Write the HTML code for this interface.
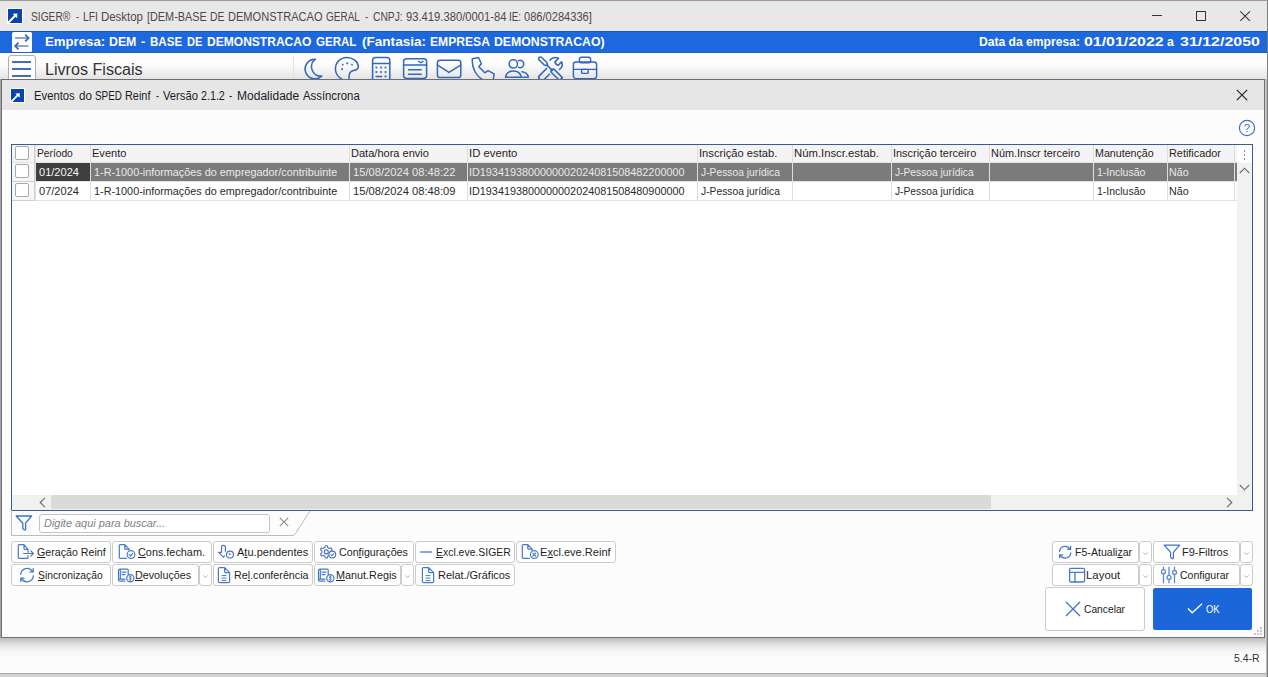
<!DOCTYPE html>
<html><head><meta charset="utf-8">
<style>
*{box-sizing:border-box;margin:0;padding:0}
html,body{width:1268px;height:677px;overflow:hidden;background:#fcfcfc;font-family:"Liberation Sans",sans-serif;position:relative}
.a{position:absolute}
.t{white-space:nowrap;line-height:1;transform-origin:0 0}
u{text-decoration:underline;text-underline-offset:1.2px;text-decoration-thickness:1px}
svg{overflow:visible}
</style></head><body>
<div class="a" style="left:0px;top:0px;width:1268px;height:31px;background:#e8e8e8"></div>
<div class="a" style="left:0px;top:0px;width:1268px;height:1px;background:#9c9c9c"></div>
<svg class="a" style="left:7px;top:8px;" width="16" height="16" viewBox="0 0 16 16"><rect x="0" y="0" width="16" height="16" fill="#fff"/><rect x="1" y="1" width="14" height="14" fill="#0a42b0"/><path d="M1.2 14.8 L8.6 7.2" stroke="#fff" stroke-width="2"/><path d="M5.6 5.8 L10.4 5.6 L10.2 10.4 Z" fill="#fff"/></svg>
<div class="a" style="left:1152px;top:15px;width:10px;height:1px;background:#333"></div>
<div class="a" style="left:1196px;top:11px;width:10px;height:10px;border:1px solid #333"></div>
<svg class="a" style="left:1240px;top:11px;" width="10" height="10" viewBox="0 0 10 10"><path d="M0.3 0.3 L9.9 9.9 M9.9 0.3 L0.3 9.9" stroke="#333" stroke-width="1.05"/></svg>
<div class="a" style="left:0px;top:31px;width:1268px;height:22px;background:#1d68dc"></div>
<div class="a" style="left:0px;top:31px;width:1268px;height:1px;background:#1a57b8"></div>
<div class="a" style="left:0px;top:52px;width:1268px;height:1px;background:#1a5ec8"></div>
<svg class="a" style="left:12px;top:32px;" width="20" height="20" viewBox="0 0 20 20"><rect x="0" y="0" width="20" height="20" rx="1.5" fill="#fff"/><path d="M3.1 6 H16" stroke="#8ea3c6" stroke-width="1.9"/><path d="M13.2 2.6 L16.6 6 L13.2 9.3" stroke="#3a6cc4" stroke-width="1.8" fill="none"/><path d="M4 14 H16.6" stroke="#8ea3c6" stroke-width="1.9"/><path d="M6.5 10.7 L3.2 14 L6.5 17.3" stroke="#3a6cc4" stroke-width="1.8" fill="none"/></svg>
<div class="a" style="left:0px;top:53px;width:1268px;height:26px;background:linear-gradient(#fdfffe 0%,#fdfdfd 40%,#f1f1f1 72%,#e3e3e3 100%)"></div>
<div class="a" style="left:8px;top:55px;width:28px;height:30px;border:1px solid #aeaeae;border-radius:3px;background:#fff"></div>
<div class="a" style="left:12px;top:61px;width:19px;height:2px;background:#4270b8"></div>
<div class="a" style="left:12px;top:68px;width:19px;height:2px;background:#4270b8"></div>
<div class="a" style="left:12px;top:75px;width:19px;height:2px;background:#4270b8"></div>
<div class="a" style="left:293px;top:55px;width:1px;height:24px;background:#e2e2e2"></div>
<svg class="a" style="left:300px;top:53px;" width="26" height="26" viewBox="0 0 26 26"><g fill="none" stroke="#3166c2" stroke-width="1.6" stroke-linecap="round" stroke-linejoin="round"><path d="M15.4 6.2 A9.8 9.8 0 1 0 21.7 23.1 A9.35 9.35 0 0 1 15.4 6.2 Z"/></g></svg>
<svg class="a" style="left:334px;top:56px;" width="26" height="24" viewBox="0 0 26 24"><g fill="none" stroke="#3166c2" stroke-width="1.5" stroke-linecap="round" stroke-linejoin="round"><path d="M15.2 23.5 C14.6 20.5 14.8 15.5 19.5 14.6 C23 14 24.6 12.7 24.4 10.3 C23.8 5.2 18.5 1.4 12.8 1.4 C6.3 1.4 1.4 6.6 1.4 12.8 C1.4 17.6 4.6 21.6 8.6 23.6"/><g fill="#3166c2" stroke="none"><rect x="7.2" y="12.3" width="1.8" height="1.8"/><rect x="12.3" y="6.4" width="1.8" height="1.8"/><rect x="7.9" y="7.8" width="1.6" height="1.6"/><rect x="17.2" y="7.8" width="1.6" height="1.6"/></g></g></svg>
<svg class="a" style="left:370px;top:56px;" width="22" height="26" viewBox="0 0 22 26"><g fill="none" stroke="#3166c2" stroke-width="1.5" stroke-linecap="round" stroke-linejoin="round"><rect x="2.6" y="1.6" width="17.2" height="25" rx="3"/><path d="M2.6 7.6 H19.8"/><path d="M6.2 20.4 H11.6"/><g fill="#3166c2" stroke="none"><rect x="5.5" y="10.6" width="1.8" height="1.8"/><rect x="10.1" y="10.6" width="1.8" height="1.8"/><rect x="14.6" y="10.6" width="1.8" height="1.8"/><rect x="5.5" y="15.1" width="1.8" height="1.8"/><rect x="10.1" y="15.1" width="1.8" height="1.8"/><rect x="14.6" y="15.1" width="1.8" height="1.8"/><rect x="14.6" y="19.5" width="1.8" height="1.8"/></g></g></svg>
<svg class="a" style="left:402px;top:57px;" width="26" height="23" viewBox="0 0 26 23"><g fill="none" stroke="#3166c2" stroke-width="1.5" stroke-linecap="round" stroke-linejoin="round"><rect x="1.6" y="1.8" width="23" height="19.6" rx="2.8"/><path d="M1.6 8 H24.6 M6.6 12.7 H19.2 M6.6 17.2 H19.2"/><path d="M16.6 4.4 L18.8 5.8 L21 4.4" stroke-width="1.3"/></g></svg>
<svg class="a" style="left:436px;top:59px;" width="26" height="20" viewBox="0 0 26 20"><g fill="none" stroke="#3166c2" stroke-width="1.5" stroke-linecap="round" stroke-linejoin="round"><rect x="1.4" y="1.3" width="23.4" height="17.2" rx="2.6"/><path d="M1.6 6.2 L13 13.4 L24.6 6.2"/></g></svg>
<svg class="a" style="left:470px;top:56px;" width="26" height="25" viewBox="0 0 26 25"><g fill="none" stroke="#3166c2" stroke-width="1.5" stroke-linecap="round" stroke-linejoin="round"><path d="M2.3 2.8 L8.5 1.5 L11.4 7.7 L8.8 10.8 L14.8 16.8 L18.1 14.7 L24.1 17.8 L23.2 24 M2.3 2.8 C1.8 12.5 6.5 20.5 13.5 24.2"/></g></svg>
<svg class="a" style="left:504px;top:58px;" width="26" height="21" viewBox="0 0 26 21"><g fill="none" stroke="#3166c2" stroke-width="1.5" stroke-linecap="round" stroke-linejoin="round"><circle cx="9.3" cy="5.9" r="4.2"/><path d="M14.4 2.7 A3.7 3.7 0 1 1 14.6 9.4"/><path d="M1.5 19.2 C2.2 15.5 5.2 13 9.4 13 C13.6 13 16.7 15.5 17.3 19.2 Z"/><path d="M18 13.8 C21.6 14.4 23.9 16.2 24.4 19.2 H18.8"/></g></svg>
<svg class="a" style="left:536px;top:54px;" width="30" height="27" viewBox="0 0 30 27"><g fill="none" stroke="#3166c2" stroke-width="1.6" stroke-linecap="round" stroke-linejoin="round"><path d="M5.6 3.5 C4.9 2.8 3.8 2.8 3.1 3.5 C2.4 4.2 2.4 5.3 3.1 6 L8.3 11 L11.6 11.7 L10.9 8.5 Z"/><path d="M11.6 11.7 L16.4 16.4"/><path d="M15.7 18.7 C14.9 17.9 14.9 16.6 15.7 15.8 C16.5 15 17.8 15 18.6 15.8 L26.4 23.6 L23.5 26.5 Z"/><path d="M13.9 6.4 C15.6 3.6 19.6 2.7 22.6 4.3 L19 7.9 C19.3 9.9 20.3 10.9 22.3 11.2 L25.6 7.8 C26.9 10.6 26 13.6 23.5 15.3"/><path d="M10.6 14.5 L3.5 21.6 C2.6 22.6 2.6 24.1 3.5 25 M13.4 20.2 L8.4 25.2"/></g></svg>
<svg class="a" style="left:572px;top:56px;" width="26" height="24" viewBox="0 0 26 24"><g fill="none" stroke="#3166c2" stroke-width="1.4" stroke-linecap="round" stroke-linejoin="round"><rect x="7.4" y="1.3" width="11.2" height="5.4" rx="1.8"/><rect x="1.4" y="6" width="23.2" height="16.6" rx="2.6"/><path d="M1.4 13.4 H24.6"/><rect x="9.6" y="13.4" width="6.6" height="4" rx="0.8"/></g></svg>
<div class="a" style="left:0px;top:79px;width:1268px;height:598px;background:#fcfcfc"></div>
<div class="a" style="left:0px;top:638px;width:1268px;height:20px;background:linear-gradient(#bdbdbd 0px,#c8c8c8 2px,#dadada 5px,#ebebeb 9px,#f7f7f7 14px,#fcfcfc 19px)"></div>
<div class="a" style="left:0px;top:673px;width:1268px;height:1px;background:#a9a9a9"></div>
<div class="a" style="left:0px;top:674px;width:1268px;height:3px;background:#d2d2d2"></div>
<div class="a" style="left:0px;top:79px;width:1px;height:559px;background:#a4a4a4"></div>
<div class="a" style="left:1265px;top:79px;width:1px;height:560px;background:#cdcdcd"></div>
<div class="a" style="left:1266px;top:79px;width:1px;height:598px;background:#b9b9b9"></div>
<div class="a" style="left:1267px;top:0px;width:1px;height:677px;background:#7c7c7c"></div>
<div class="a" style="left:1px;top:79px;width:1264px;height:559px;border:1px solid #6f6f6f;background:#fcfcfc"></div>
<div class="a" style="left:2px;top:80px;width:1262px;height:30px;background:#e6e6e6"></div>
<svg class="a" style="left:10px;top:88px;" width="15" height="15" viewBox="0 0 15 15"><rect x="0" y="0" width="15" height="15" fill="#fff"/><rect x="1" y="1" width="13" height="13" fill="#0a42b0"/><path d="M1.1 13.9 L8.1 6.8" stroke="#fff" stroke-width="1.9"/><path d="M5.3 5.4 L9.8 5.2 L9.6 9.7 Z" fill="#fff"/></svg>
<svg class="a" style="left:1236px;top:89px;" width="12" height="12" viewBox="0 0 12 12"><path d="M0.8 0.8 L11.2 11.2 M11.2 0.8 L0.8 11.2" stroke="#222" stroke-width="1.2"/></svg>
<svg class="a" style="left:1238px;top:119px;" width="18" height="18" viewBox="0 0 18 18"><circle cx="9" cy="9" r="7.6" fill="none" stroke="#3e74c8" stroke-width="1.2"/><text x="9" y="13.2" text-anchor="middle" font-family="Liberation Sans" font-size="11.5" fill="#3e74c8">?</text></svg>
<div class="a" style="left:11px;top:144px;width:1242px;height:367px;border:1px solid #3d5a94;background:#fff"></div>
<div class="a" style="left:12px;top:145px;width:1225px;height:17px;background:#f4f4f4"></div>
<div class="a" style="left:12px;top:162px;width:1225px;height:1px;background:#e3e3e3"></div>
<div class="a" style="left:1237px;top:145px;width:15px;height:18px;background:#fff"></div>
<div class="a" style="left:35px;top:145px;width:1px;height:56px;background:#dedede"></div>
<div class="a" style="left:90px;top:145px;width:1px;height:56px;background:#dedede"></div>
<div class="a" style="left:349px;top:145px;width:1px;height:56px;background:#dedede"></div>
<div class="a" style="left:467px;top:145px;width:1px;height:56px;background:#dedede"></div>
<div class="a" style="left:697px;top:145px;width:1px;height:56px;background:#dedede"></div>
<div class="a" style="left:792px;top:145px;width:1px;height:56px;background:#dedede"></div>
<div class="a" style="left:891px;top:145px;width:1px;height:56px;background:#dedede"></div>
<div class="a" style="left:989px;top:145px;width:1px;height:56px;background:#dedede"></div>
<div class="a" style="left:1093px;top:145px;width:1px;height:56px;background:#dedede"></div>
<div class="a" style="left:1167px;top:145px;width:1px;height:56px;background:#dedede"></div>
<div class="a" style="left:1234px;top:145px;width:1px;height:56px;background:#dedede"></div>
<div class="a" style="left:12px;top:163px;width:23px;height:38px;background:#f7f7f7"></div>
<div class="a" style="left:12px;top:181px;width:1225px;height:1px;background:#e2e2e2"></div>
<div class="a" style="left:12px;top:200px;width:1225px;height:1px;background:#e2e2e2"></div>
<div class="a" style="left:12px;top:181px;width:23px;height:1px;background:#cfcfcf"></div>
<div class="a" style="left:12px;top:200px;width:23px;height:1px;background:#cfcfcf"></div>
<div class="a" style="left:34px;top:145px;width:1px;height:56px;background:#d0d0d0"></div>
<div class="a" style="left:36px;top:163px;width:54px;height:18px;background:#3f3f3f"></div>
<div class="a" style="left:91px;top:163px;width:258px;height:18px;background:#7b7b7b"></div>
<div class="a" style="left:350px;top:163px;width:117px;height:18px;background:#7b7b7b"></div>
<div class="a" style="left:468px;top:163px;width:229px;height:18px;background:#7b7b7b"></div>
<div class="a" style="left:698px;top:163px;width:94px;height:18px;background:#7b7b7b"></div>
<div class="a" style="left:793px;top:163px;width:98px;height:18px;background:#7b7b7b"></div>
<div class="a" style="left:892px;top:163px;width:97px;height:18px;background:#7b7b7b"></div>
<div class="a" style="left:990px;top:163px;width:103px;height:18px;background:#7b7b7b"></div>
<div class="a" style="left:1094px;top:163px;width:73px;height:18px;background:#7b7b7b"></div>
<div class="a" style="left:1168px;top:163px;width:66px;height:18px;background:#7b7b7b"></div>
<div class="a" style="left:1235px;top:163px;width:2px;height:18px;background:#7b7b7b"></div>
<div class="a" style="left:15px;top:146px;width:14px;height:14px;border:1px solid #a9a9a9;border-radius:2px;background:#fff"></div>
<div class="a" style="left:15px;top:164px;width:14px;height:14px;border:1px solid #a9a9a9;border-radius:2px;background:#fff"></div>
<div class="a" style="left:15px;top:183px;width:14px;height:14px;border:1px solid #a9a9a9;border-radius:2px;background:#fff"></div>
<div class="a" style="left:1243.7px;top:150.2px;width:1.7px;height:1.7px;background:#6078c8;border-radius:0.5px"></div>
<div class="a" style="left:1243.7px;top:154.39999999999998px;width:1.7px;height:1.7px;background:#6078c8;border-radius:0.5px"></div>
<div class="a" style="left:1243.7px;top:158.29999999999998px;width:1.7px;height:1.7px;background:#6078c8;border-radius:0.5px"></div>
<div class="a" style="left:1237px;top:163px;width:15px;height:347px;background:#f1f1f1"></div>
<svg class="a" style="left:1239px;top:166px;" width="11" height="9" viewBox="0 0 11 9"><path d="M0.8 7 L5.5 2.2 L10.2 7" fill="none" stroke="#6b6b6b" stroke-width="1.1"/></svg>
<svg class="a" style="left:1239px;top:483px;" width="11" height="9" viewBox="0 0 11 9"><path d="M0.8 2 L5.5 6.8 L10.2 2" fill="none" stroke="#6b6b6b" stroke-width="1.1"/></svg>
<div class="a" style="left:12px;top:495px;width:1225px;height:15px;background:#f1f1f1"></div>
<div class="a" style="left:51px;top:495px;width:940px;height:14px;background:#dadada"></div>
<svg class="a" style="left:38px;top:497px;" width="9" height="11" viewBox="0 0 9 11"><path d="M7 0.8 L2.2 5.5 L7 10.2" fill="none" stroke="#6b6b6b" stroke-width="1.1"/></svg>
<svg class="a" style="left:1225px;top:497px;" width="9" height="11" viewBox="0 0 9 11"><path d="M2 0.8 L6.8 5.5 L2 10.2" fill="none" stroke="#6b6b6b" stroke-width="1.1"/></svg>
<svg class="a" style="left:10px;top:510px;" width="305" height="27" viewBox="0 0 305 27"><path d="M1.5 0 V25.5 H282 C283.5 25.5 284.5 25 285.3 23.8 L300 1" fill="none" stroke="#bcbcbc" stroke-width="1"/></svg>
<svg class="a" style="left:15px;top:515px;" width="18" height="16" viewBox="0 0 18 16"><path d="M1.2 1 H16.6 L10.6 8.2 V14.2 C10.6 15 9.6 15 9 14.5 L7.8 13.4 V8.2 Z" fill="none" stroke="#3c73c8" stroke-width="1.3" stroke-linejoin="round"/></svg>
<div class="a" style="left:39px;top:514px;width:231px;height:19px;border:1px solid #c4c4c4;border-radius:3px;background:#fff"></div>
<svg class="a" style="left:279px;top:517px;" width="10" height="10" viewBox="0 0 10 10"><path d="M0.8 0.8 L9.2 9.2 M9.2 0.8 L0.8 9.2" stroke="#8c8c8c" stroke-width="1.1"/></svg>
<div class="a" style="left:11px;top:541px;width:100px;height:22px;border:1px solid #cbcbcb;border-radius:3px;background:#fff;"></div>
<div class="a" style="left:112px;top:541px;width:100px;height:22px;border:1px solid #cbcbcb;border-radius:3px;background:#fff;"></div>
<div class="a" style="left:213px;top:541px;width:100px;height:22px;border:1px solid #cbcbcb;border-radius:3px;background:#fff;"></div>
<div class="a" style="left:314px;top:541px;width:100px;height:22px;border:1px solid #cbcbcb;border-radius:3px;background:#fff;"></div>
<div class="a" style="left:415px;top:541px;width:100px;height:22px;border:1px solid #cbcbcb;border-radius:3px;background:#fff;"></div>
<div class="a" style="left:516px;top:541px;width:100px;height:22px;border:1px solid #cbcbcb;border-radius:3px;background:#fff;"></div>
<div class="a" style="left:11px;top:564px;width:100px;height:22px;border:1px solid #cbcbcb;border-radius:3px;background:#fff;"></div>
<div class="a" style="left:112px;top:564px;width:87px;height:22px;border:1px solid #cbcbcb;border-radius:3px;background:#fff;"></div>
<div class="a" style="left:199px;top:564px;width:13px;height:22px;border:1px solid #cbcbcb;border-radius:3px;background:#fff;"></div>
<svg class="a" style="left:203px;top:575px;" width="5" height="3" viewBox="0 0 5 3"><path d="M0.4 0.5 L2.5 2.4 L4.6 0.5" fill="none" stroke="#a6b6d4" stroke-width="1"/></svg>
<div class="a" style="left:213px;top:564px;width:100px;height:22px;border:1px solid #cbcbcb;border-radius:3px;background:#fff;"></div>
<div class="a" style="left:314px;top:564px;width:87px;height:22px;border:1px solid #cbcbcb;border-radius:3px;background:#fff;"></div>
<div class="a" style="left:401px;top:564px;width:13px;height:22px;border:1px solid #cbcbcb;border-radius:3px;background:#fff;"></div>
<svg class="a" style="left:405px;top:575px;" width="5" height="3" viewBox="0 0 5 3"><path d="M0.4 0.5 L2.5 2.4 L4.6 0.5" fill="none" stroke="#a6b6d4" stroke-width="1"/></svg>
<div class="a" style="left:415px;top:564px;width:100px;height:22px;border:1px solid #cbcbcb;border-radius:3px;background:#fff;"></div>
<div class="a" style="left:1052px;top:541px;width:87px;height:22px;border:1px solid #cbcbcb;border-radius:3px;background:#fff;"></div>
<div class="a" style="left:1139px;top:541px;width:13px;height:22px;border:1px solid #cbcbcb;border-radius:3px;background:#fff;"></div>
<svg class="a" style="left:1143px;top:552px;" width="5" height="3" viewBox="0 0 5 3"><path d="M0.4 0.5 L2.5 2.4 L4.6 0.5" fill="none" stroke="#a6b6d4" stroke-width="1"/></svg>
<div class="a" style="left:1153px;top:541px;width:87px;height:22px;border:1px solid #cbcbcb;border-radius:3px;background:#fff;"></div>
<div class="a" style="left:1240px;top:541px;width:13px;height:22px;border:1px solid #cbcbcb;border-radius:3px;background:#fff;"></div>
<svg class="a" style="left:1244px;top:552px;" width="5" height="3" viewBox="0 0 5 3"><path d="M0.4 0.5 L2.5 2.4 L4.6 0.5" fill="none" stroke="#a6b6d4" stroke-width="1"/></svg>
<div class="a" style="left:1052px;top:564px;width:87px;height:22px;border:1px solid #cbcbcb;border-radius:3px;background:#fff;"></div>
<div class="a" style="left:1139px;top:564px;width:13px;height:22px;border:1px solid #cbcbcb;border-radius:3px;background:#fff;"></div>
<svg class="a" style="left:1143px;top:575px;" width="5" height="3" viewBox="0 0 5 3"><path d="M0.4 0.5 L2.5 2.4 L4.6 0.5" fill="none" stroke="#a6b6d4" stroke-width="1"/></svg>
<div class="a" style="left:1153px;top:564px;width:87px;height:22px;border:1px solid #cbcbcb;border-radius:3px;background:#fff;"></div>
<div class="a" style="left:1240px;top:564px;width:13px;height:22px;border:1px solid #cbcbcb;border-radius:3px;background:#fff;"></div>
<svg class="a" style="left:1244px;top:575px;" width="5" height="3" viewBox="0 0 5 3"><path d="M0.4 0.5 L2.5 2.4 L4.6 0.5" fill="none" stroke="#a6b6d4" stroke-width="1"/></svg>
<div class="a" style="left:1045px;top:587px;width:100px;height:44px;border:1px solid #cbcbcb;border-radius:3px;background:#fff;"></div>
<div class="a" style="left:1153px;top:588px;width:99px;height:42px;background:#1b66d9;border-radius:2px"></div>
<svg class="a" style="left:1065px;top:601px;" width="16" height="16" viewBox="0 0 16 16"><path d="M1 1 L15 15 M15 1 L1 15" stroke="#3f74c9" stroke-width="1.3"/></svg>
<svg class="a" style="left:1187px;top:603px;" width="16" height="11" viewBox="0 0 16 11"><path d="M1 5.5 L5.2 9.8 L15 0.8" fill="none" stroke="#fff" stroke-width="1.3"/></svg>
<div class="a" style="left:1260px;top:627px;width:2px;height:2px;background:#c9c9c9"></div>
<div class="a" style="left:1257px;top:630px;width:2px;height:2px;background:#c9c9c9"></div>
<div class="a" style="left:1260px;top:630px;width:2px;height:2px;background:#c9c9c9"></div>
<div class="a" style="left:1254px;top:633px;width:2px;height:2px;background:#c9c9c9"></div>
<div class="a" style="left:1257px;top:633px;width:2px;height:2px;background:#c9c9c9"></div>
<div class="a" style="left:1260px;top:633px;width:2px;height:2px;background:#c9c9c9"></div>
<svg class="a" style="left:17px;top:543px;" width="19" height="17" viewBox="0 0 19 17"><g fill="none" stroke="#4479cc" stroke-width="1.2" stroke-linecap="round" stroke-linejoin="round"><path d="M11 9.3 V6.3 L7 1.7 H2.2 C1.6 1.7 1.3 2 1.3 2.6 V14.5 C1.3 15.1 1.6 15.4 2.2 15.4 H10.1 C10.7 15.4 11 15.1 11 14.5 V12.6 M7 1.7 V5.6 C7 6 7.3 6.3 7.7 6.3 H11"/><path d="M6.6 10.5 H16.4 M13.8 7.9 L16.4 10.5 L13.8 13.1"/></g></svg>
<svg class="a" style="left:118px;top:543px;" width="19" height="17" viewBox="0 0 19 17"><g fill="none" stroke="#4479cc" stroke-width="1.2" stroke-linecap="round" stroke-linejoin="round"><path d="M8.4 15.4 H2.2 C1.6 15.4 1.3 15.1 1.3 14.5 V2.6 C1.3 2 1.6 1.7 2.2 1.7 H6.8 L11.2 6.2 V7.2 M6.8 1.7 V5.4 C6.8 5.9 7.1 6.2 7.5 6.2 H11.2"/><circle cx="13" cy="11.6" r="3.9"/><path d="M11.2 11.7 L12.5 13 L14.9 10.4"/></g></svg>
<svg class="a" style="left:217px;top:543px;" width="19" height="17" viewBox="0 0 19 17"><g fill="none" stroke="#4f74c4" stroke-width="1.2" stroke-linecap="round" stroke-linejoin="round"><path d="M4.5 9.4 V3.9 C4.5 2.9 5.3 2.3 6.45 2.3 C7.6 2.3 8.4 2.9 8.4 3.9 V8.3 M4.5 9.4 H1.6 L6.4 14.2 L7.7 12.9"/><circle cx="13" cy="11.6" r="3.5"/><path d="M13 11.6 L12.2 10.8" stroke-width="1.4"/></g></svg>
<svg class="a" style="left:319px;top:544.4px;" width="19" height="18" viewBox="0 0 19 18"><g fill="none" stroke="#4d70bd" stroke-width="1.1" stroke-linejoin="round" stroke-linecap="round"><path d="M6.3 1.8 H8.3 L8.8 3.6 L10.4 4.5 L12.1 3.9 L13.1 5.6 L11.8 7 V8.8 L13.1 10.2 L12.1 11.9 L10.4 11.3 L8.8 12.2 L8.3 14 H6.3 L5.8 12.2 L4.2 11.3 L2.5 11.9 L1.5 10.2 L2.8 8.8 V7 L1.5 5.6 L2.5 3.9 L4.2 4.5 L5.8 3.6 Z"/><circle cx="7.3" cy="7.9" r="2"/><circle cx="13.3" cy="10.5" r="3.4" fill="#fff"/><path d="M11.9 10.7 L12.9 11.6 L14.8 9.7"/></g></svg>
<div class="a" style="left:420px;top:551px;width:12px;height:2px;background:#8ea7d6"></div>
<svg class="a" style="left:521px;top:543px;" width="19" height="17" viewBox="0 0 19 17"><g fill="none" stroke="#4479cc" stroke-width="1.2" stroke-linecap="round" stroke-linejoin="round"><path d="M8.4 15.4 H2.2 C1.6 15.4 1.3 15.1 1.3 14.5 V2.6 C1.3 2 1.6 1.7 2.2 1.7 H6.8 L11.2 6.2 V7.2 M6.8 1.7 V5.4 C6.8 5.9 7.1 6.2 7.5 6.2 H11.2"/><circle cx="13.3" cy="11.6" r="3.9"/><path d="M11.9 10.2 L14.7 13 M14.7 10.2 L11.9 13"/></g></svg>
<svg class="a" style="left:18px;top:566px;" width="18" height="18" viewBox="0 0 18 18"><g fill="none" stroke="#4479cc" stroke-width="1.3" stroke-linecap="round" stroke-linejoin="round"><path d="M2.7 8.3 A6.4 6.4 0 0 1 14.6 5.6"/><path d="M15.2 2.6 V5.9 H11.9"/><path d="M15.4 9.8 A6.4 6.4 0 0 1 3.4 12.4"/><path d="M2.8 15.4 V12.1 H6.1"/></g></svg>
<svg class="a" style="left:117px;top:567px;" width="18" height="17" viewBox="0 0 18 17"><g fill="none" stroke="#4479cc" stroke-width="1.2" stroke-linecap="round" stroke-linejoin="round"><path d="M3.3 2.2 H10.2 C10.8 2.2 11.2 2.6 11.2 3.2 V7.5 M7.8 14.2 H2.8 C2 14.2 1.5 13.7 1.5 12.9 V3.2 C1.5 2.6 2 2.2 2.6 2.2 M3.3 2.2 V12 M1.5 12.2 H8"/><path d="M5 5.2 H9 M5 7.6 H8"/><circle cx="13.3" cy="11.3" r="3.6"/><path d="M14.3 9.8 C13.5 9.2 12.3 9.5 12.4 10.4 C12.5 11.3 14.4 11.1 14.3 12.2 C14.2 13.1 13 13.3 12.2 12.7 M13.3 8.9 V13.7" stroke-width="0.9"/></g></svg>
<svg class="a" style="left:317px;top:567px;" width="18" height="17" viewBox="0 0 18 17"><g fill="none" stroke="#4479cc" stroke-width="1.2" stroke-linecap="round" stroke-linejoin="round"><path d="M3.3 2.2 H10.2 C10.8 2.2 11.2 2.6 11.2 3.2 V7.5 M7.8 14.2 H2.8 C2 14.2 1.5 13.7 1.5 12.9 V3.2 C1.5 2.6 2 2.2 2.6 2.2 M3.3 2.2 V12 M1.5 12.2 H8"/><path d="M5 5.2 H9 M5 7.6 H8"/><circle cx="13.3" cy="11.3" r="3.6"/><path d="M14.3 9.8 C13.5 9.2 12.3 9.5 12.4 10.4 C12.5 11.3 14.4 11.1 14.3 12.2 C14.2 13.1 13 13.3 12.2 12.7 M13.3 8.9 V13.7" stroke-width="0.9"/></g></svg>
<svg class="a" style="left:217px;top:566px;" width="14" height="18" viewBox="0 0 14 18"><g fill="none" stroke="#4479cc" stroke-width="1.2" stroke-linecap="round" stroke-linejoin="round"><path d="M7.6 1.6 H2.6 C1.9 1.6 1.4 2.1 1.4 2.8 V15.4 C1.4 16.1 1.9 16.6 2.6 16.6 H11.4 C12.1 16.6 12.6 16.1 12.6 15.4 V6.6 Z M7.6 1.6 V5.6 C7.6 6.2 8 6.6 8.6 6.6 H12.6"/><path d="M4.6 9.6 H9.4 M4.6 12.1 H9.4 M4.6 14.6 H9.4" stroke-width="1" stroke-linecap="butt"/></g></svg>
<svg class="a" style="left:421px;top:566px;" width="14" height="18" viewBox="0 0 14 18"><g fill="none" stroke="#4479cc" stroke-width="1.2" stroke-linecap="round" stroke-linejoin="round"><path d="M7.6 1.6 H2.6 C1.9 1.6 1.4 2.1 1.4 2.8 V15.4 C1.4 16.1 1.9 16.6 2.6 16.6 H11.4 C12.1 16.6 12.6 16.1 12.6 15.4 V6.6 Z M7.6 1.6 V5.6 C7.6 6.2 8 6.6 8.6 6.6 H12.6"/><path d="M4.6 9.6 H9.4 M4.6 12.1 H9.4 M4.6 14.6 H9.4" stroke-width="1" stroke-linecap="butt"/></g></svg>
<svg class="a" style="left:1057px;top:544px;" width="16" height="16" viewBox="0 0 16 16"><g transform="translate(0.2 0.2) scale(0.88)" fill="none" stroke="#4479cc" stroke-width="1.45" stroke-linecap="round" stroke-linejoin="round"><path d="M2.7 8.3 A6.4 6.4 0 0 1 14.6 5.6"/><path d="M15.2 2.6 V5.9 H11.9"/><path d="M15.4 9.8 A6.4 6.4 0 0 1 3.4 12.4"/><path d="M2.8 15.4 V12.1 H6.1"/></g></svg>
<svg class="a" style="left:1068px;top:567px;" width="18" height="16" viewBox="0 0 18 16"><g fill="none" stroke="#4479cc" stroke-width="1.3" stroke-linecap="round" stroke-linejoin="round"><rect x="1.6" y="1.4" width="15" height="13.6" rx="1.4"/><path d="M1.6 5.3 H16.6 M7 5.3 V15"/></g></svg>
<svg class="a" style="left:1163px;top:544px;" width="18" height="16" viewBox="0 0 18 16"><path d="M1.2 1.2 H16.6 L10.4 8.4 V14 C10.4 14.8 9.6 15 9 14.5 L7.6 13.2 V8.4 Z" fill="none" stroke="#3c73c8" stroke-width="1.2" stroke-linejoin="round"/></svg>
<svg class="a" style="left:1161px;top:566px;" width="16" height="18" viewBox="0 0 16 18"><g fill="none" stroke="#5a8ad6" stroke-width="1.3" stroke-linecap="round" stroke-linejoin="round"><path d="M2.5 1.2 V3.6 M2.5 7.8 V16.8 M8 1.2 V9.4 M8 13.4 V16.8 M13.5 1.2 V4.4 M13.5 8.6 V16.8"/><circle cx="2.5" cy="5.7" r="2"/><circle cx="8" cy="11.4" r="2"/><circle cx="13.5" cy="6.5" r="2"/></g></svg>
<div class="a t" style="left:30.65px;top:10.80px;font-size:12px;font-weight:normal;font-style:normal;color:#4a4a4a;transform:scaleX(0.8511);">SIGER®</div>
<div class="a t" style="left:76.00px;top:10.80px;font-size:12px;font-weight:normal;font-style:normal;color:#4a4a4a;transform:scaleX(0.7250);">-</div>
<div class="a t" style="left:82.74px;top:10.80px;font-size:12px;font-weight:normal;font-style:normal;color:#4a4a4a;transform:scaleX(0.8625);">LFI</div>
<div class="a t" style="left:101.15px;top:10.80px;font-size:12px;font-weight:normal;font-style:normal;color:#4a4a4a;transform:scaleX(0.9512);">Desktop</div>
<div class="a t" style="left:147.20px;top:10.80px;font-size:12px;font-weight:normal;font-style:normal;color:#4a4a4a;transform:scaleX(0.9046);">[DEM-BASE</div>
<div class="a t" style="left:209.94px;top:10.80px;font-size:12px;font-weight:normal;font-style:normal;color:#4a4a4a;transform:scaleX(0.8625);">DE</div>
<div class="a t" style="left:228.28px;top:10.80px;font-size:12px;font-weight:normal;font-style:normal;color:#4a4a4a;transform:scaleX(0.9208);">DEMONSTRACAO</div>
<div class="a t" style="left:326.20px;top:10.80px;font-size:12px;font-weight:normal;font-style:normal;color:#4a4a4a;transform:scaleX(0.8317);">GERAL</div>
<div class="a t" style="left:364.70px;top:10.80px;font-size:12px;font-weight:normal;font-style:normal;color:#4a4a4a;transform:scaleX(0.7750);">-</div>
<div class="a t" style="left:373.00px;top:10.80px;font-size:12px;font-weight:normal;font-style:normal;color:#4a4a4a;transform:scaleX(0.8559);">CNPJ:</div>
<div class="a t" style="left:405.70px;top:10.80px;font-size:12px;font-weight:normal;font-style:normal;color:#4a4a4a;transform:scaleX(0.9346);">93.419.380/0001-84</div>
<div class="a t" style="left:508.78px;top:10.80px;font-size:12px;font-weight:normal;font-style:normal;color:#4a4a4a;transform:scaleX(0.8231);">IE:</div>
<div class="a t" style="left:524.40px;top:10.80px;font-size:12px;font-weight:normal;font-style:normal;color:#4a4a4a;transform:scaleX(0.9247);">086/0284336]</div>
<div class="a t" style="left:44.74px;top:36.10px;font-size:12.5px;font-weight:bold;font-style:normal;color:#fff;transform:scaleX(1.0564);">Empresa:</div>
<div class="a t" style="left:108.92px;top:36.10px;font-size:12.5px;font-weight:bold;font-style:normal;color:#fff;transform:scaleX(0.9846);">DEM</div>
<div class="a t" style="left:141.00px;top:36.10px;font-size:12.5px;font-weight:bold;font-style:normal;color:#fff;transform:scaleX(1.0000);">-</div>
<div class="a t" style="left:149.97px;top:36.10px;font-size:12.5px;font-weight:bold;font-style:normal;color:#fff;transform:scaleX(0.9265);">BASE</div>
<div class="a t" style="left:187.42px;top:36.10px;font-size:12.5px;font-weight:bold;font-style:normal;color:#fff;transform:scaleX(0.8812);">DE</div>
<div class="a t" style="left:206.94px;top:36.10px;font-size:12.5px;font-weight:bold;font-style:normal;color:#fff;transform:scaleX(0.9636);">DEMONSTRACAO</div>
<div class="a t" style="left:316.20px;top:36.10px;font-size:12.5px;font-weight:bold;font-style:normal;color:#fff;transform:scaleX(0.9227);">GERAL</div>
<div class="a t" style="left:362.30px;top:36.10px;font-size:12.5px;font-weight:bold;font-style:normal;color:#fff;transform:scaleX(1.0845);">(Fantasia:</div>
<div class="a t" style="left:429.83px;top:36.10px;font-size:12.5px;font-weight:bold;font-style:normal;color:#fff;transform:scaleX(0.9689);">EMPRESA</div>
<div class="a t" style="left:494.02px;top:36.10px;font-size:12.5px;font-weight:bold;font-style:normal;color:#fff;transform:scaleX(0.9829);">DEMONSTRACAO)</div>
<div class="a t" style="left:978.93px;top:36.10px;font-size:12.5px;font-weight:bold;font-style:normal;color:#fff;transform:scaleX(0.9686);">Data da empresa:</div>
<div class="a t" style="left:1083.80px;top:36.10px;font-size:12.5px;font-weight:bold;font-style:normal;color:#fff;transform:scaleX(1.2726);">01/01/2022</div>
<div class="a t" style="left:1167.40px;top:36.10px;font-size:12.5px;font-weight:bold;font-style:normal;color:#fff;transform:scaleX(0.9857);">a</div>
<div class="a t" style="left:1179.60px;top:36.10px;font-size:12.5px;font-weight:bold;font-style:normal;color:#fff;transform:scaleX(1.2774);">31/12/2050</div>
<div class="a t" style="left:44.99px;top:61.80px;font-size:16px;font-weight:normal;font-style:normal;color:#333;transform:scaleX(1.0073);">Livros Fiscais</div>
<div class="a t" style="left:1233.50px;top:653.00px;font-size:11.5px;font-weight:normal;font-style:normal;color:#333;transform:scaleX(0.9107);">5.4-R</div>
<div class="a t" style="left:33.86px;top:89.60px;font-size:12px;font-weight:normal;font-style:normal;color:#1b1b2b;transform:scaleX(0.9381);">Eventos</div>
<div class="a t" style="left:78.60px;top:89.60px;font-size:12px;font-weight:normal;font-style:normal;color:#1b1b2b;transform:scaleX(0.9692);">do</div>
<div class="a t" style="left:94.67px;top:89.60px;font-size:12px;font-weight:normal;font-style:normal;color:#1b1b2b;transform:scaleX(0.8258);">SPED</div>
<div class="a t" style="left:124.99px;top:89.60px;font-size:12px;font-weight:normal;font-style:normal;color:#1b1b2b;transform:scaleX(0.9071);">Reinf</div>
<div class="a t" style="left:156.00px;top:89.60px;font-size:12px;font-weight:normal;font-style:normal;color:#1b1b2b;transform:scaleX(0.7250);">-</div>
<div class="a t" style="left:162.60px;top:89.60px;font-size:12px;font-weight:normal;font-style:normal;color:#1b1b2b;transform:scaleX(0.9351);">Versão</div>
<div class="a t" style="left:201.40px;top:89.60px;font-size:12px;font-weight:normal;font-style:normal;color:#1b1b2b;transform:scaleX(0.8923);">2.1.2</div>
<div class="a t" style="left:228.90px;top:89.60px;font-size:12px;font-weight:normal;font-style:normal;color:#1b1b2b;transform:scaleX(0.8250);">-</div>
<div class="a t" style="left:236.90px;top:89.60px;font-size:12px;font-weight:normal;font-style:normal;color:#1b1b2b;transform:scaleX(1.0033);">Modalidade</div>
<div class="a t" style="left:302.60px;top:89.60px;font-size:12px;font-weight:normal;font-style:normal;color:#1b1b2b;transform:scaleX(0.9450);">Assíncrona</div>
<div class="a t" style="left:36.67px;top:147.80px;font-size:11px;font-weight:normal;font-style:normal;color:#1e1e1e;transform:scaleX(0.9289);">Período</div>
<div class="a t" style="left:91.80px;top:147.80px;font-size:11px;font-weight:normal;font-style:normal;color:#1e1e1e;transform:scaleX(1.0030);">Evento</div>
<div class="a t" style="left:350.80px;top:147.80px;font-size:11px;font-weight:normal;font-style:normal;color:#1e1e1e;transform:scaleX(1.0039);">Data/hora envio</div>
<div class="a t" style="left:468.87px;top:147.80px;font-size:11px;font-weight:normal;font-style:normal;color:#1e1e1e;transform:scaleX(1.0283);">ID evento</div>
<div class="a t" style="left:698.58px;top:147.80px;font-size:11px;font-weight:normal;font-style:normal;color:#1e1e1e;transform:scaleX(1.0160);">Inscrição estab.</div>
<div class="a t" style="left:793.67px;top:147.80px;font-size:11px;font-weight:normal;font-style:normal;color:#1e1e1e;transform:scaleX(1.0284);">Núm.Inscr.estab.</div>
<div class="a t" style="left:892.61px;top:147.80px;font-size:11px;font-weight:normal;font-style:normal;color:#1e1e1e;transform:scaleX(0.9940);">Inscrição terceiro</div>
<div class="a t" style="left:990.81px;top:147.80px;font-size:11px;font-weight:normal;font-style:normal;color:#1e1e1e;transform:scaleX(0.9921);">Núm.Inscr terceiro</div>
<div class="a t" style="left:1094.83px;top:147.80px;font-size:11px;font-weight:normal;font-style:normal;color:#1e1e1e;transform:scaleX(0.9700);">Manutenção</div>
<div class="a t" style="left:1168.51px;top:147.80px;font-size:11px;font-weight:normal;font-style:normal;color:#1e1e1e;transform:scaleX(0.9885);">Retificador</div>
<div class="a t" style="left:38.70px;top:166.90px;font-size:11px;font-weight:normal;font-style:normal;color:#f6f6f6;transform:scaleX(1.0050);">01/2024</div>
<div class="a t" style="left:93.72px;top:166.90px;font-size:11px;font-weight:normal;font-style:normal;color:#e9e9e9;transform:scaleX(0.9846);">1-R-1000-informações do empregador/contribuinte</div>
<div class="a t" style="left:352.78px;top:166.90px;font-size:11px;font-weight:normal;font-style:normal;color:#e9e9e9;transform:scaleX(1.0160);">15/08/2024 08:48:22</div>
<div class="a t" style="left:469.32px;top:166.90px;font-size:11px;font-weight:normal;font-style:normal;color:#e9e9e9;transform:scaleX(0.9839);">ID1934193800000002024081508482200000</div>
<div class="a t" style="left:700.80px;top:166.90px;font-size:11px;font-weight:normal;font-style:normal;color:#e9e9e9;transform:scaleX(0.9353);">J-Pessoa jurídica</div>
<div class="a t" style="left:894.90px;top:166.90px;font-size:11px;font-weight:normal;font-style:normal;color:#e9e9e9;transform:scaleX(0.9318);">J-Pessoa jurídica</div>
<div class="a t" style="left:1097.15px;top:166.90px;font-size:11px;font-weight:normal;font-style:normal;color:#e9e9e9;transform:scaleX(0.9520);">1-Inclusão</div>
<div class="a t" style="left:1169.33px;top:166.90px;font-size:11px;font-weight:normal;font-style:normal;color:#e9e9e9;transform:scaleX(0.9737);">Não</div>
<div class="a t" style="left:38.70px;top:185.60px;font-size:11px;font-weight:normal;font-style:normal;color:#2a2a2a;transform:scaleX(1.0050);">07/2024</div>
<div class="a t" style="left:93.72px;top:185.60px;font-size:11px;font-weight:normal;font-style:normal;color:#2a2a2a;transform:scaleX(0.9846);">1-R-1000-informações do empregador/contribuinte</div>
<div class="a t" style="left:352.78px;top:185.60px;font-size:11px;font-weight:normal;font-style:normal;color:#2a2a2a;transform:scaleX(1.0160);">15/08/2024 08:48:09</div>
<div class="a t" style="left:469.32px;top:185.60px;font-size:11px;font-weight:normal;font-style:normal;color:#2a2a2a;transform:scaleX(0.9839);">ID1934193800000002024081508480900000</div>
<div class="a t" style="left:700.80px;top:185.60px;font-size:11px;font-weight:normal;font-style:normal;color:#2a2a2a;transform:scaleX(0.9353);">J-Pessoa jurídica</div>
<div class="a t" style="left:894.90px;top:185.60px;font-size:11px;font-weight:normal;font-style:normal;color:#2a2a2a;transform:scaleX(0.9318);">J-Pessoa jurídica</div>
<div class="a t" style="left:1097.15px;top:185.60px;font-size:11px;font-weight:normal;font-style:normal;color:#2a2a2a;transform:scaleX(0.9520);">1-Inclusão</div>
<div class="a t" style="left:1169.33px;top:185.60px;font-size:11px;font-weight:normal;font-style:normal;color:#2a2a2a;transform:scaleX(0.9737);">Não</div>
<div class="a t" style="left:44.00px;top:517.90px;font-size:11px;font-weight:normal;font-style:italic;color:#808080;transform:scaleX(0.9942);">Digite aqui para buscar...</div>
<div class="a t" style="left:36.70px;top:546.80px;font-size:11px;font-weight:normal;font-style:normal;color:#1e1e1e;transform:scaleX(0.9676);"><u>G</u>eração Reinf</div>
<div class="a t" style="left:137.60px;top:546.80px;font-size:11px;font-weight:normal;font-style:normal;color:#1e1e1e;transform:scaleX(0.9866);"><u>C</u>ons.fecham.</div>
<div class="a t" style="left:236.90px;top:546.80px;font-size:11px;font-weight:normal;font-style:normal;color:#1e1e1e;transform:scaleX(1.0028);">A<u>t</u>u.pendentes</div>
<div class="a t" style="left:338.50px;top:546.80px;font-size:11px;font-weight:normal;font-style:normal;color:#1e1e1e;transform:scaleX(0.9704);">Con<u>f</u>igurações</div>
<div class="a t" style="left:435.75px;top:546.80px;font-size:11px;font-weight:normal;font-style:normal;color:#1e1e1e;transform:scaleX(0.9487);"><u>E</u>xcl.eve.SIGER</div>
<div class="a t" style="left:539.50px;top:546.80px;font-size:11px;font-weight:normal;font-style:normal;color:#1e1e1e;transform:scaleX(1.0043);">E<u>x</u>cl.eve.Reinf</div>
<div class="a t" style="left:37.70px;top:569.70px;font-size:11px;font-weight:normal;font-style:normal;color:#1e1e1e;transform:scaleX(0.9362);"><u>S</u>incronização</div>
<div class="a t" style="left:135.42px;top:569.70px;font-size:11px;font-weight:normal;font-style:normal;color:#1e1e1e;transform:scaleX(0.9768);"><u>D</u>evoluções</div>
<div class="a t" style="left:233.72px;top:569.70px;font-size:11px;font-weight:normal;font-style:normal;color:#1e1e1e;transform:scaleX(0.9750);">Re<u>l</u>.conferência</div>
<div class="a t" style="left:335.52px;top:569.70px;font-size:11px;font-weight:normal;font-style:normal;color:#1e1e1e;transform:scaleX(0.9836);"><u>M</u>anut.Regis</div>
<div class="a t" style="left:437.81px;top:569.70px;font-size:11px;font-weight:normal;font-style:normal;color:#1e1e1e;transform:scaleX(0.9944);">Relat./Gráficos</div>
<div class="a t" style="left:1074.64px;top:547.00px;font-size:11px;font-weight:normal;font-style:normal;color:#1e1e1e;transform:scaleX(0.9627);">F5-Atuali<u>z</u>ar</div>
<div class="a t" style="left:1181.51px;top:547.00px;font-size:11px;font-weight:normal;font-style:normal;color:#1e1e1e;transform:scaleX(0.9933);">F9-Filtros</div>
<div class="a t" style="left:1086.46px;top:569.80px;font-size:11px;font-weight:normal;font-style:normal;color:#1e1e1e;transform:scaleX(1.0375);">Layout</div>
<div class="a t" style="left:1180.00px;top:569.60px;font-size:11px;font-weight:normal;font-style:normal;color:#1e1e1e;transform:scaleX(0.9538);">Configurar</div>
<div class="a t" style="left:1083.70px;top:604.10px;font-size:11.5px;font-weight:normal;font-style:normal;color:#1e1e1e;transform:scaleX(0.8913);">Cancelar</div>
<div class="a t" style="left:1205.70px;top:604.10px;font-size:11.5px;font-weight:normal;font-style:normal;color:#fff;transform:scaleX(0.8176);">OK</div>
</body></html>
